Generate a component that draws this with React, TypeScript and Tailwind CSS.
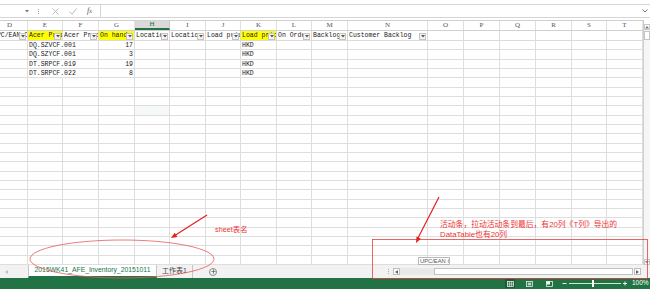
import React from "react";

type Col = { id: string; w: string; name?: string; hl?: boolean };

const COLS: Col[] = [
  { id: "D", w: "w-[36px] -ml-[8px]", name: "UPC/EAN Code" },
  { id: "E", w: "w-[35px]", name: "Acer Product No", hl: true },
  { id: "F", w: "w-[36px]", name: "Acer Product Name" },
  { id: "G", w: "w-[36px]", name: "On hand", hl: true },
  { id: "H", w: "w-[35px]", name: "Location" },
  { id: "I", w: "w-[36px]", name: "Location 2" },
  { id: "J", w: "w-[35px]", name: "Load price" },
  { id: "K", w: "w-[36px]", name: "Load price currency", hl: true },
  { id: "L", w: "w-[35px]", name: "On Order" },
  { id: "M", w: "w-[36px]", name: "Backlog" },
  { id: "N", w: "w-[80px]", name: "Customer Backlog" },
  { id: "O", w: "w-[36px]" },
  { id: "P", w: "w-[36px]" },
  { id: "Q", w: "w-[36px]" },
  { id: "R", w: "w-[36px]" },
  { id: "S", w: "w-[35px]" },
  { id: "T", w: "w-[36px]" },
];

const DATA: Record<number, Record<string, string>> = {
  0: { E: "DQ.SZVCF.001", G: "17", K: "HKD" },
  1: { E: "DQ.SZYCF.001", G: "3", K: "HKD" },
  2: { E: "DT.SRPCF.019", G: "19", K: "HKD" },
  3: { E: "DT.SRPCF.022", G: "8", K: "HKD" },
};

const ROWS = Array.from({ length: 24 }, (_, i) => i);

function FilterButton() {
  return (
    <div className="absolute right-[1px] top-[1.5px] flex h-[7px] w-[7px] items-center justify-center border border-[#c4c4c4] bg-[#f4f4f4]">
      <svg width="4" height="3" viewBox="0 0 4 3">
        <polygon points="0,0 4,0 2,2.5" fill="#555" />
      </svg>
    </div>
  );
}

function FormulaBar() {
  return (
    <div className="flex h-[13px] items-stretch border-b border-[#d5d5d5] bg-white">
      <div className="flex w-[33px] items-center justify-end pr-[4px]">
        <svg width="4" height="3" viewBox="0 0 4 3">
          <polygon points="0,0 4,0 2,2.5" fill="#777" />
        </svg>
      </div>
      <div className="flex w-[10px] flex-col items-center justify-center gap-[1px]">
        <div className="h-[1px] w-[1px] bg-[#999]" />
        <div className="h-[1px] w-[1px] bg-[#999]" />
        <div className="h-[1px] w-[1px] bg-[#999]" />
      </div>
      <div className="flex w-[25px] items-center justify-center">
        <svg width="7" height="7" viewBox="0 0 7 7">
          <path d="M0.5 0.5 L6.5 6.5 M6.5 0.5 L0.5 6.5" stroke="#b4b4b4" strokeWidth="0.9" />
        </svg>
      </div>
      <div className="flex w-[9px] items-center justify-center">
        <svg width="8" height="7" viewBox="0 0 8 7">
          <path d="M0.5 3.8 L3 6.3 L7.5 0.5" stroke="#b4b4b4" strokeWidth="0.9" fill="none" />
        </svg>
      </div>
      <div className="flex w-[23px] items-center pl-[10px] font-['Liberation_Serif',serif] text-[8px] italic leading-none text-[#555]">
        f<span className="text-[6px]">x</span>
      </div>
      <div className="flex flex-1 items-center justify-end border-l border-[#d5d5d5] pr-[2px]">
        <svg width="6" height="4" viewBox="0 0 6 4">
          <path d="M0.5 0.5 L3 3 L5.5 0.5" stroke="#666" strokeWidth="0.9" fill="none" />
        </svg>
      </div>
    </div>
  );
}

function Grid() {
  return (
    <div className="w-[643px] overflow-hidden">
      {/* column letters */}
      <div className="flex h-[11px] border-t border-b border-[#d0d0d0] bg-white">
        {COLS.map((c) =>
          c.id === "H" ? (
            <div
              key={c.id}
              className={`${c.w} flex shrink-0 items-center justify-center border-r border-b-[2px] border-r-[#c8c8c8] border-b-[#217346] bg-[#dadada] font-['Liberation_Serif',serif] text-[7px] text-[#217346]`}
            >
              {c.id}
            </div>
          ) : (
            <div
              key={c.id}
              className={`${c.w} flex shrink-0 items-center justify-center border-r border-[#e0e0e0] font-['Liberation_Serif',serif] text-[7px] text-[#555]`}
            >
              {c.id}
            </div>
          )
        )}
      </div>

      {/* filter row */}
      <div className="flex h-[10px]">
        {COLS.map((c) => (
          <div
            key={c.id}
            className={`${c.w} relative shrink-0 overflow-hidden whitespace-nowrap border-r border-b border-[#dadada] pl-[1px] font-['Liberation_Mono',monospace] text-[6.5px] leading-[9px] text-[#222] ${
              c.hl ? "bg-[#ffff00]" : "bg-white"
            }`}
          >
            {c.name}
            {c.name && <FilterButton />}
          </div>
        ))}
      </div>

      {/* data rows */}
      {ROWS.map((r) => (
        <div key={r} className="flex h-[9.333px]">
          {COLS.map((c) => {
            const v = DATA[r]?.[c.id];
            const selected = r === 7 && c.id === "H";
            const spill = c.id === "E" && !!v;
            return (
              <div
                key={c.id}
                className={`${c.w} relative shrink-0 whitespace-nowrap border-b border-[#dedede] px-[1px] pt-[1px] font-['Liberation_Mono',monospace] text-[6.5px] leading-[8px] text-[#222] ${
                  c.id === "G" ? "text-right" : "text-left"
                } ${spill ? "z-10 overflow-visible border-r border-r-transparent" : "overflow-hidden border-r border-r-[#dedede]"}`}
              >
                {v}
                {selected && (
                  <div className="absolute inset-[-1px] border-[1.5px] border-[#80a08a] bg-[#f6faf7]" />
                )}
              </div>
            );
          })}
        </div>
      ))}
    </div>
  );
}

function VScroll() {
  return (
    <div className="flex w-[7px] flex-col border-l border-[#cfcfcf] bg-[#f6f6f6]">
      <div className="h-[4px] bg-white" />
      <div className="flex h-[6px] items-center justify-center border border-[#c8c8c8] bg-white">
        <svg width="4" height="3" viewBox="0 0 4 3">
          <polygon points="0,2.5 4,2.5 2,0" fill="#777" />
        </svg>
      </div>
      <div className="mt-[1px] h-[9px] border border-[#c4c4c4] bg-white" />
      <div className="flex-1" />
      <div className="flex h-[6px] items-center justify-center border border-[#c8c8c8] bg-white">
        <svg width="4" height="3" viewBox="0 0 4 3">
          <polygon points="0,0 4,0 2,2.5" fill="#777" />
        </svg>
      </div>
    </div>
  );
}

function TabBar() {
  return (
    <div className="flex h-[13px] bg-[#f2f2f2]">
      <div className="flex w-[383px] items-stretch">
        <div className="flex w-[28px] items-center pl-[5px]">
          <svg width="3" height="4" viewBox="0 0 3 4">
            <polygon points="3,0 3,4 0,2" fill="#c0c0c0" />
          </svg>
        </div>
        <div className="flex w-[129px] items-center justify-center border-x border-b-[2px] border-x-[#c6c6c6] border-b-[#217346] bg-white font-['Liberation_Sans',sans-serif] text-[6.8px] text-[#217346]">
          2015WK41_AFE_Inventory_20151011
        </div>
        <div className="flex w-[36px] items-center justify-center border-r border-[#c6c6c6] font-['Liberation_Sans','Noto_Sans_CJK_SC',sans-serif] text-[7px] text-[#444]">
          工作表1
        </div>
        <div className="ml-[16px] flex items-center">
          <div className="flex h-[8px] w-[8px] items-center justify-center rounded-full border border-[#8a8a8a]">
            <svg width="5" height="5" viewBox="0 0 5 5">
              <path d="M2.5 0.5 V4.5 M0.5 2.5 H4.5" stroke="#666" strokeWidth="0.8" />
            </svg>
          </div>
        </div>
      </div>
      <div className="flex flex-1 items-center">
        <div className="flex w-[10px] flex-col items-center gap-[1px]">
          <div className="h-[1px] w-[1px] bg-[#aaa]" />
          <div className="h-[1px] w-[1px] bg-[#aaa]" />
          <div className="h-[1px] w-[1px] bg-[#aaa]" />
        </div>
        <div className="flex h-[7px] w-[7px] items-center justify-center border border-[#bdbdbd] bg-white">
          <svg width="3" height="4" viewBox="0 0 3 4">
            <polygon points="3,0 3,4 0,2" fill="#666" />
          </svg>
        </div>
        <div className="h-[7px] w-[34px] bg-[#e8e8e8]" />
        <div className="h-[7px] w-[199px] border border-[#c2c2c2] bg-white" />
        <div className="ml-[1px] flex h-[7px] w-[7px] items-center justify-center border border-[#bdbdbd] bg-white">
          <svg width="3" height="4" viewBox="0 0 3 4">
            <polygon points="0,0 0,4 3,2" fill="#666" />
          </svg>
        </div>
      </div>
    </div>
  );
}

function StatusBar() {
  return (
    <div className="flex h-[11px] items-center justify-end bg-[#217346]">
      <div className="mr-[10px] flex h-[9px] w-[10px] items-center justify-center bg-[#1a5c38]">
        <svg width="7" height="6" viewBox="0 0 7 6">
          <rect x="0.5" y="0.5" width="6" height="5" fill="none" stroke="#fff" strokeWidth="0.7" />
          <path d="M2.5 0.5 V5.5 M4.5 0.5 V5.5 M0.5 2.2 H6.5 M0.5 3.8 H6.5" stroke="#fff" strokeWidth="0.5" />
        </svg>
      </div>
      <div className="mr-[12px] flex w-[8px] items-center justify-center">
        <svg width="7" height="6" viewBox="0 0 7 6">
          <rect x="0.5" y="0.5" width="6" height="5" fill="none" stroke="#fff" strokeWidth="0.7" />
          <rect x="1.8" y="1.6" width="3.4" height="2.8" fill="#fff" opacity="0.7" />
        </svg>
      </div>
      <div className="mr-[9px] flex w-[8px] items-center justify-center">
        <svg width="7" height="6" viewBox="0 0 7 6">
          <rect x="0.5" y="0.5" width="6" height="5" fill="none" stroke="#fff" strokeWidth="0.7" />
          <rect x="0.5" y="0.5" width="3.5" height="3" fill="#fff" />
        </svg>
      </div>
      <svg width="5" height="3" viewBox="0 0 5 3">
        <path d="M0.5 1.5 H4.5" stroke="#fff" strokeWidth="0.9" />
      </svg>
      <div className="relative ml-[2px] h-[7px] w-[52px]">
        <div className="absolute left-0 right-0 top-[3px] h-[1px] bg-[#d0e6d8]" />
        <div className="absolute left-[23px] top-0 h-[7px] w-[2px] bg-white" />
      </div>
      <svg width="6" height="5" viewBox="0 0 6 5" className="ml-[1px]">
        <path d="M3 0.5 V4.5 M1 2.5 H5" stroke="#fff" strokeWidth="0.9" />
      </svg>
      <div className="ml-[4px] w-[18px] font-['Liberation_Sans',sans-serif] text-[6.5px] leading-none text-white">
        100%
      </div>
    </div>
  );
}

function Annotations() {
  return (
    <>
      <svg className="pointer-events-none absolute left-0 top-0" width="650" height="289" viewBox="0 0 650 289">
        <ellipse cx="122" cy="259" rx="92" ry="19" fill="none" stroke="#e65b5b" strokeWidth="0.8" />
        <line x1="207" y1="215" x2="174" y2="236" stroke="#e3201f" strokeWidth="1.2" />
        <polygon points="171,238 177.4,236.9 174.7,232.7" fill="#e3201f" />
        <rect x="372.5" y="239.5" width="275" height="39" fill="none" stroke="#e5403f" strokeWidth="0.8" />
        <line x1="439" y1="197" x2="417.5" y2="239" stroke="#e3201f" strokeWidth="1.2" />
        <polygon points="416,243 420.9,238.8 416.5,236.6" fill="#e3201f" />
      </svg>
      <div className="pointer-events-none absolute left-[215px] top-[225px] font-['Liberation_Sans','Noto_Sans_CJK_SC',sans-serif] text-[7.3px] leading-[10px] text-[#ee3333]">
        sheet表名
      </div>
      <div className="pointer-events-none absolute left-[440px] top-[220px] font-['Liberation_Sans','Noto_Sans_CJK_SC',sans-serif] text-[7.8px] leading-[10px] text-[#ee3333]">
        <div>活动条，拉动活动条到最后，有20列《T列》导出的</div>
        <div>DataTable也有20列</div>
      </div>
      <div className="absolute left-[418px] top-[257px] h-[8px] w-[32px] overflow-hidden whitespace-nowrap border border-[#b8b8b8] bg-white pl-[1px] font-['Liberation_Sans',sans-serif] text-[5.8px] leading-[6px] text-[#555]">
        UPC/EAN Code
      </div>
    </>
  );
}

export default function App() {
  return (
    <div className="relative h-[289px] w-[650px] overflow-hidden bg-white">
      <div className="h-[5px] border-b border-[#d5d5d5] bg-white" />
      <FormulaBar />
      <div className="h-[2px] bg-white" />
      <div className="flex h-[245px]">
        <Grid />
        <VScroll />
      </div>
      <TabBar />
      <StatusBar />
      <Annotations />
    </div>
  );
}
